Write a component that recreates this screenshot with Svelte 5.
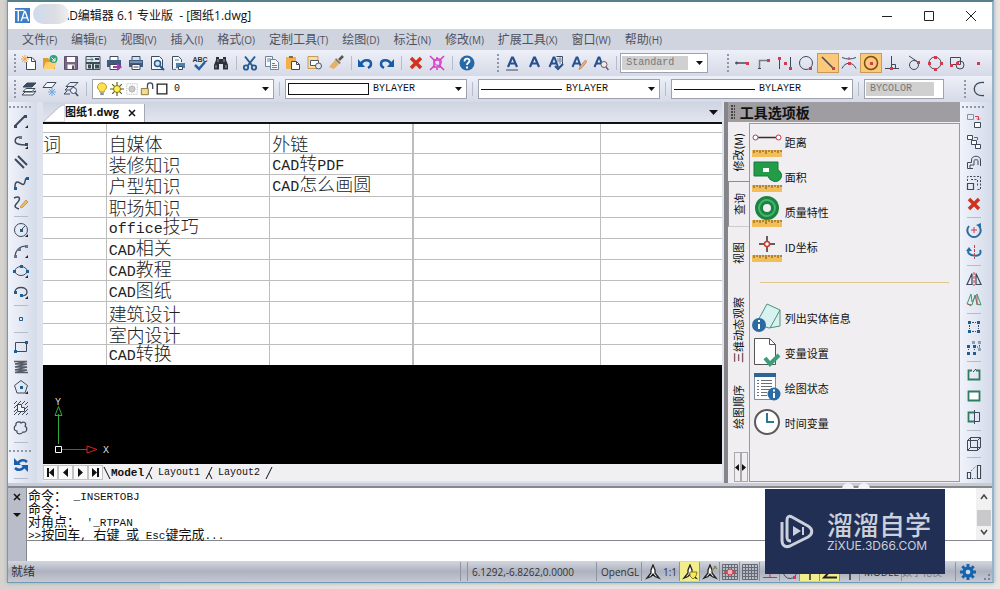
<script lang="ts">
  type Tool = { icon: string; label: string; active?: boolean };
  type Item = Tool | 'sep' | 'grip';

  const menus = [
    ['文件', 'F'], ['编辑', 'E'], ['视图', 'V'], ['插入', 'I'], ['格式', 'O'], ['定制工具', 'T'],
    ['绘图', 'D'], ['标注', 'N'], ['修改', 'M'], ['扩展工具', 'X'], ['窗口', 'W'], ['帮助', 'H'],
  ];

  const t = (icon: string, label: string, active = false): Tool => ({ icon, label, active });

  const standardBar: Item[] = [
    'grip', t('new', '新建'), t('open', '打开'), t('save', '保存'), t('export', '输出'), t('plot', '打印'),
    t('print', '快速打印'), t('preview', '打印预览'), t('publish', '发布'), t('spell', '拼写检查'), t('find', '查找'),
    'sep', t('cut', '剪切'), t('copy', '复制'), t('paste', '粘贴'), t('pasteBlock', '粘贴为块'), t('brush', '特性匹配'),
    'sep', t('undo', '放弃'), t('redo', '重做'),
    'sep', t('erase', '删除'), t('explode', '分解'),
    'sep', t('help', '帮助'),
  ];

  const textBar: Item[] = [
    'grip', t('textUnder', '多行文字'), t('text', '单行文字'), t('textFind', '文字样式'), t('textEdit', '编辑文字'),
    t('textZoom', '查找文字'), 'sep',
  ];

  const snapBar: Item[] = [
    'grip', t('track', '临时追踪点'), t('from', '捕捉自'), t('mid', '两点之间'), t('quad', '象限点'),
    t('end', '端点', true), t('inter', '交点'), t('center', '圆心', true), t('perp', '垂足'), t('tangent', '切点'),
    t('node4', '四象限'), t('insert', '插入点'), t('point', '节点'),
  ];

  const drawBar: Item[] = [
    'grip', t('line', '直线'), t('pline', '多段线'), t('mline', '多线'), t('spline', '样条曲线'), t('sketch', '徒手画'),
    'sep', t('circle', '圆'), t('arc', '圆弧'), t('ellipse', '椭圆'), t('earc', '椭圆弧'),
    'sep', t('dot', '点'),
    'sep', t('rect', '矩形'), t('helix', '螺旋'), t('polygon', '多边形'), t('hatch', '边界'), t('cloud', '云线'),
    'sep', 'grip', t('sync', '同步'), 'sep',
  ];

  const modifyBar: Item[] = [
    'grip', t('copyObj', '复制'), t('copyMany', '多重复制'), t('offset', '偏移'), t('scale', '缩放'), t('erase', '删除'),
    'sep', t('rotate', '旋转'), t('rotate3d', '三维旋转'),
    'sep', t('mirror', '镜像'), t('mirror3d', '三维镜像'),
    'sep', t('array', '阵列'), t('array3d', '三维阵列'),
    'sep', t('breakAt', '打断'), t('join', '合并'), t('trim', '修剪'),
    'sep', t('box', '长方体'),
    'sep', t('stretch', '拉伸'),
  ];

  const rows = [
    ['词', '自媒体', '外链'],
    ['', '装修知识', 'CAD转PDF'],
    ['', '户型知识', 'CAD怎么画圆'],
    ['', '职场知识', ''],
    ['', 'office技巧', ''],
    ['', 'CAD相关', ''],
    ['', 'CAD教程', ''],
    ['', 'CAD图纸', ''],
    ['', '建筑设计', ''],
    ['', '室内设计', ''],
    ['', 'CAD转换', ''],
  ];

  const sideTabs = ['修改(M)', '查询', '视图', '三维动态观察', '绘图顺序'];

  const queryTools = [
    ['distance', '距离'], ['area', '面积'], ['mass', '质量特性'], ['idpoint', 'ID坐标'],
  ];
  const infoTools = [
    ['list', '列出实体信息'], ['setvar', '变量设置'], ['status', '绘图状态'], ['time', '时间变量'],
  ];

  const log = ['命令： _INSERTOBJ', '命令：', "对角点： '_RTPAN", '>>按回车, 右键 或 Esc键完成...'];

  let sideTab = $state('查询');
  let layout = $state('Model');
  let command = $state('');

  const letterA = '<path d="M4 12 8 2.5h1L13 12M5.5 8.5h6" stroke="#27508f" stroke-width="2.2"/>';
  const smallA = '<path d="M1.500 12 5.500 2.500h1L10 12M3 8.500h6" stroke="#27508f" stroke-width="2"/>';
  const dotR = (x: number, y: number) => `<rect x="${x - 1}" y="${y - 1}" width="3" height="3" fill="#d23a4e" stroke="none"/>`;
  const sq = (x: number, y: number, c = '#1d5f93') => `<rect x="${x}" y="${y}" width="3" height="3" fill="${c}" stroke="none"/>`;
  const corner = '<path d="M15 12v3h-3z" fill="#222" stroke="none"/>';
  const ruler =
    '<path d="M0 24h30v7H0z" fill="#f3bd57" stroke="none"/><path d="M2 24v3M5 24v2M8 24v3M11 24v2M14 24v4M17 24v2M20 24v3M23 24v2M26 24v3M29 24v2" stroke="#6b5020"/>';

  const icons: Record<string, string> = {
    new: '<path d="M5 2.500h6l3.500 3.500v8.500H5.500V7" fill="#fff"/><path d="M10.500 2.500v4h4"/><path d="M4 0v8M0 4h8M1 1l6 6M7 1 1 7" stroke="#f0a34a"/>',
    open: '<path d="M1 14V3h5l1.500 2H13v9z" fill="#e39a2b" stroke="none"/><path d="M1 14 4 7h11l-3 7z" fill="#ffcf6b" stroke="none"/><circle cx="11.500" cy="4" r="4" fill="#2fa37c" stroke="none"/><path d="m9.500 2.500 3.500 3.500m0-3v3h-3" stroke="#fff"/>',
    save: '<path d="M1.500 1.500h13v13h-13z" fill="#766783" stroke="#5c4e69"/><path d="M4 2h8v5H4zM4.500 9.500h7V14h-7z" fill="#fff" stroke="none"/><path d="M9 10.500h2V14H9z" fill="#5c4e69" stroke="none"/>',
    export: '<path d="M1 1.500h14v13H1z" fill="#dfe6e4"/><path d="M1 8h14M8 8v7M3 10.500h3M3 12.500h3M10 10.500h4M10 12.500h4" stroke-width="2"/><path d="M1 4.500h7m-2-2 2 2-2 2" stroke="#2c9b76"/><path d="M10 4h4" stroke-width="2"/>',
    plot: '<path d="M4 1.500h8V6H4z" fill="#fff"/><path d="M1 5h14v7H1z" fill="#3f5b80" stroke="none"/><path d="M4 9.500h8v5H4z" fill="#fff"/><path d="M7 12h7m-3-3 3.500 3-3.500 3" stroke="#9a3fa5" stroke-width="2"/>',
    print: '<path d="M4 1.500h8V6H4z" fill="#cfe3f3"/><path d="M1 5h14v7H1z" fill="#3f5b80" stroke="none"/><path d="M2 7h12" stroke="#a8c6e2"/><path d="M4 9.500h8v5H4z" fill="#fff"/><path d="M5.500 12h5"/>',
    preview: '<path d="M2.500 1.500h8l3 3v10h-11z" fill="#f6f9fc"/><circle cx="8.500" cy="8.500" r="3" fill="#cfe4f5" stroke="#255b91" stroke-width="1.500"/><path d="m11 11 4 4" stroke="#255b91" stroke-width="2"/>',
    publish: '<path d="M2.500 14.500v-13h6l3 3V7" fill="#f6f9fc"/><path d="M5 5h4M2.500 14.500H6" stroke="#4b81ad"/><path d="M6 8h9v5H6z" fill="#4b81ad" stroke="none"/><path d="M8.500 11.500h4v3h-4z" fill="#fff"/>',
    spell: '<text x="8" y="7" font-size="7" font-weight="700" text-anchor="middle" fill="#333" stroke="none" font-family="Liberation Sans, sans-serif">ABC</text><path d="m3 10 4 4 6-7" stroke="#2462a8" stroke-width="2.500"/>',
    find: '<path d="M3 2h3v2h4V2h3v3l2 5v4.500h-5V9H6v5.500H1V10l2-5z" fill="#2d3138" stroke="none"/><path d="M3 10v3M13 10v3M5 4v3M11 4v3" stroke="#9aa4b4"/>',
    cut: '<path d="M3 1.500 10.500 11M13 1.500 5.500 11" stroke="#255b91" stroke-width="2"/><circle cx="4" cy="12.500" r="2.200" stroke="#255b91" stroke-width="1.800"/><circle cx="12" cy="12.500" r="2.200" stroke="#255b91" stroke-width="1.800"/>',
    copy: '<path d="M1.500 1.500h7v10h-7z" fill="#f7fafc" stroke="#6d8398"/><path d="M6.500 4.500h5l3 3v7h-8z" fill="#f7fafc" stroke="#6d8398"/><path d="M3 4h4M3 6h3M8 8.500h3M8 10.500h5M8 12.500h5" stroke="#6d8398"/>',
    paste: '<path d="M1 2h10v12H1z" fill="#f1b04a" stroke="none"/><path d="M4 1h4v2H4z" fill="#8b6a38" stroke="none"/><path d="M6.500 6.500h5l3 3v5h-8z" fill="#fff"/><path d="M11.500 6.500v3h3"/>',
    pasteBlock: '<path d="M1 1.500h10v12H1z" fill="#f6ddb0" stroke="#c79a55"/><path d="M3.500 5.500h8v5h-8z" fill="#fff" stroke="#4d5668"/><circle cx="11.500" cy="11" r="3" fill="#e4eaf0" stroke="#4d5668"/>',
    brush: '<path d="m15 1-4 4" stroke="#555" stroke-width="2.500"/><path d="m8 3 5 5-2 1-4-4z" fill="#8d7864" stroke="none"/><path d="m7 5 4 4-5 5-5-2z" fill="#e7b066" stroke="none"/>',
    undo: '<path d="M4 9c2-5 10-5 10 0 0 2-1 3-3 4" stroke="#165ba5" stroke-width="2.500"/><path d="M1 4v8h7z" fill="#165ba5" stroke="none"/>',
    redo: '<path d="M12 9C10 4 2 4 2 9c0 2 1 3 3 4" stroke="#165ba5" stroke-width="2.500"/><path d="M15 4v8H8z" fill="#165ba5" stroke="none"/>',
    erase: '<path d="m3 3 10 10M13 3 3 13" stroke="#d2311c" stroke-width="3.500"/>',
    explode: '<path d="M5 5h6v7H5zM1 1l4 4M15 1l-4 4M1 15l4-4M15 15l-4-4M8 2v2M8 13v2" stroke="#dc35c4" stroke-width="1.500"/><circle cx="9" cy="7" r="3.500" stroke="#dc35c4"/>',
    help: '<circle cx="8" cy="8" r="7.500" fill="#2669a4" stroke="none"/><path d="M5.500 6.500c0-4 5-3.500 5-.700C10.500 8 8 7.500 8 10" stroke="#fff" stroke-width="1.800"/><path d="M7 11.500h2v2H7z" fill="#fff" stroke="none"/>',
    textUnder: letterA + '<path d="M2 15h12"/>',
    text: letterA,
    textFind: smallA + '<path d="M8.500 1.500h6v8" fill="#eef" /><path d="M9 4h6M9 6h6M12 2v7" stroke="#7a8aa3"/><path d="m7 11 3 3 5-5" stroke="#27508f" stroke-width="2"/>',
    textEdit: smallA + '<path d="m14.500 5-5 6-1.500 3.500 3-2 5-6z" fill="#e9b38a" stroke="#c58b62"/>',
    textZoom: smallA + '<circle cx="11" cy="9.500" r="3" fill="#f6e9e4" stroke="#6a5a70"/><path d="m13 12 2.500 3" stroke="#6a5a70" stroke-width="1.500"/>',
    track: '<path d="M2 8h12" stroke="#4b4a58" stroke-width="1.500"/><circle cx="2.500" cy="8" r="1" />' + dotR(13, 8),
    from: '<path d="M4.500 14V5.500H13" stroke="#777c88" stroke-width="1.500"/>' + dotR(13, 5) + '<path d="M3 13.500h3"/>',
    mid: '<path d="M2.500 2v12M13.500 2v12"/>' + dotR(2, 3) + dotR(8, 8) + dotR(13, 13),
    quad: '<circle cx="8" cy="8" r="6.500"/>' + dotR(12, 13),
    end: '<path d="m2 2 11 11" stroke-width="1.500"/>' + dotR(13, 13),
    inter: '<path d="M1 2.500c5 2 9 2 14 0M1 13.500c3-7 11-7 14 0"/><path d="M8 2v3" stroke="#d23a4e"/>' + dotR(8, 8),
    center: '<circle cx="8" cy="8" r="6.500" stroke-width="1.500" stroke="#7a4c17"/>' + dotR(8, 8),
    perp: '<path d="M7.500 1v12M1 13.500h14M7.500 9.500h4v4"/>' + dotR(7, 13),
    tangent: '<circle cx="8" cy="10" r="4.500"/><path d="m3 1 9 6"/>' + dotR(12, 7),
    node4: '<circle cx="8" cy="8" r="6"/>' + dotR(8, 2) + dotR(8, 14) + dotR(2, 8) + dotR(14, 8),
    insert: '<path d="M1.500 2.500h10v7h-10z"/><circle cx="11" cy="10" r="4"/>' + dotR(2, 10) + dotR(8, 8),
    point: dotR(8, 8),
    halfCircle: '<path d="M13 1.500c-13-2-13 15 0 13" stroke-width="1.300"/>',
    line: '<path d="m2 13 10-10" stroke-width="2"/>' + sq(1, 12, '#3d4a5c') + sq(11, 2, '#3d4a5c') + corner,
    pline: '<path d="M7 3C1 3 1 9 5 10c3 1 5 1 8 1" stroke-width="1.500"/>' + sq(6, 2, '#66768b') + sq(12, 9, '#3d4a5c') + corner,
    mline: '<path d="m2 5 9 9M5 2l9 9" stroke-width="2"/>',
    spline: '<path d="M2 13c0-4 0-5 2-6s5 4 7 2 0-5 3-6" stroke-width="1.500"/>' + sq(1, 12) + sq(13, 2),
    sketch: '<path d="M1 3c6-3 7 1 3 5s-1 5 2 6" stroke-width="1.500"/><path d="m7 12 6-7 2 2-6 6z" fill="#edbc5f" stroke="#c89b50"/>',
    circle: '<circle cx="8" cy="8" r="6.500"/><path d="m8 8 4-4"/>' + sq(7, 7) + corner,
    arc: '<path d="M2 14C2 7 7 3 13 3" stroke-width="1.200"/>' + sq(1, 12, '#66768b') + sq(12, 2, '#66768b') + sq(5, 5, '#66768b') + corner,
    ellipse: '<ellipse cx="8" cy="8" rx="6" ry="4.500"/>' + sq(0, 7) + sq(13, 7) + sq(7, 2) + corner,
    earc: '<path d="M2 8c0-6 12-6 12 0 0 3-3 4-6 4" stroke-width="1.300"/>' + sq(1, 7) + sq(7, 10) + corner,
    dot: '<path d="M6.500 6.500h3v3h-3z" stroke="#1d5f93"/>',
    rect: '<path d="M2.500 3.500h11v9h-11z"/>' + sq(1, 11) + sq(12, 2),
    helix: '<path d="M1 2.500h13L2 5h12L2 8h12L2 11h12L2 13.500h13" stroke="#565d68" stroke-width="1.300"/>',
    polygon: '<path d="m8 1.500 6.500 5L12 14H4L1.500 6.500z"/>' + sq(7, 7) + corner,
    hatch: '<path d="M1 4l3-3M1 8l7-7M1 12l4-4M9 4l3-3M12 5l3-3M12 9l3-3M1 15l3-3M5 15l3-3M9 15l6-6M13 15l2-2"/><path d="M4.500 4.500h4v3h3v4h-7z" fill="#f4f7fc"/>',
    cloud: '<path d="M3 5c-1-3 4-4 5-2 3-2 6 0 4 3 3 2 2 7-2 6-2 3-7 2-6-1-3 0-4-4-1-6z" stroke-width="1.200"/>',
    sync: '<path d="M14 5c-3-3-7-2-9 1M2 11c3 3 7 2 9-1" stroke="#1a5fae" stroke-width="2.500"/><path d="M1 1v7h7zM15 15V8H8z" fill="#1a5fae" stroke="none"/>',
    copyObj: '<path d="M1.500 1.500h6v5h-6z" stroke="#8a909a"/><path d="M8.500 9.500h6v5h-6z" fill="#fff"/><path d="M9 3.500h3.500V7m-1.500-1.500L12.500 7 14 5.500" stroke="#d23a4e"/>',
    copyMany: '<path d="M1.500 1.500h5v4h-5zM5.500 6.500h5v4h-5zM9.500 10.500h5v4h-5z" fill="#fff"/><path d="M8 3.500h3.500V6" stroke="#d23a4e"/>',
    offset: '<path d="M1.500 14.500v-6h4V6c0-5 9-5 9 0v6M4 14v-3h4V6.500c0-1 4-1 4 0V11M1.500 14.500H7"/>',
    scale: '<path d="M1.500 8.500h6v6h-6z" stroke-width="1.200"/><path d="M1.500 6V1.500h13v13H10M5 4.500h6.500V12" stroke-dasharray="2 1.500"/>',
    rotate: '<path d="M3 3c-4 5 0 11 5 11s9-6 5-11" stroke="#2a6f9f" stroke-width="2"/><path d="M8 4v6M5 7h6" stroke="#d23a4e"/><path d="M15 5V0L10 2z" fill="#2a6f9f" stroke="none"/>',
    rotate3d: '<path d="M3 6c-5 6 15 9 11 0" stroke="#2a6f9f" stroke-width="2"/><path d="M8.500 1v14" stroke="#d23a4e" stroke-dasharray="3 1"/><path d="M0 7h6L3 3z" fill="#2a6f9f" stroke="none"/>',
    mirror: '<path d="M6 2.500v11H1zM10 2.500v11h5z" stroke-width="1.200"/><path d="M8 1v14" stroke="#d23a4e" stroke-dasharray="3 1"/>',
    mirror3d: '<path d="M5 2 1 12l5 1 3-10 2 9 4 1-4-11-5 8z" stroke="#3c9768"/><path d="m2 12 3 2M11 4v9" stroke="#d23a4e"/>',
    array: sq(2, 2) + sq(11, 2) + sq(2, 11) + sq(11, 11) + '<path d="M6 3.500h4M6 12.500h4M3.500 6v4M12.500 6v4" stroke-dasharray="2 1"/>',
    array3d: sq(1, 5) + sq(7, 5) + sq(1, 12) + sq(7, 12) + sq(12, 1, '#8aa0b5') + sq(12, 8, '#8aa0b5') + sq(6, 1, '#8aa0b5') + '<path d="M2.500 9v2M8.500 9v2M13.500 5v2M11 7h4" stroke-dasharray="1 1"/>',
    breakAt: '<path d="M6 3.500H2.500v9h11v-9H10" stroke="#2e7d63" stroke-width="1.800"/><path d="m7 5 3-3"/>',
    join: '<path d="M2.500 3.500h11v9h-11z" fill="#fff" stroke="#2e7d63" stroke-width="1.800"/>',
    trim: '<path d="M8 3.500H2.500v9H8" stroke="#2e7d63" stroke-width="1.800"/><path d="M8.500 1v14M9 3.500h4.500v9H9"/>',
    box: '<path d="M1.500 4.500h10v10h-10zM4.500 1.500h10v10M1.500 4.500l3-3M11.500 4.500l3-3M11.500 14.500l3-3M4.500 1.500v10h10M4.500 11.500l-3 3"/>',
    stretch: '<path d="M1.500 8.500h3v6h-3zM11.500 1.500h3v13h-3z" fill="#fff" stroke-width="1.200"/><path d="m5 7 5-5M6 14.500h4" stroke-dasharray="1 1.500"/>',
    layers: '<path d="m1 14 3-3h8l3-1-3 4zM2 10.500l3-3h9l-3 3z" fill="#f5f8fc"/><path d="m2 6 4-4h9l-4 4z" fill="#3a4a60"/>',
    layerStar: '<path d="m1 6.500 4-5h9l-4 5z" fill="#f5f8fc"/><path d="M10 7v8M6 11h8M7 8l6 6M13 8l-6 6" stroke="#6aa9dd"/>',
    layerFind: '<path d="m1 13 3-3M2 9l3-3M3 5.500l4-4h8l-4 4zM1 13h6M2 9h6"/><circle cx="10.500" cy="9.500" r="3" fill="#eef"/><path d="m12.500 12 2.500 3" stroke-width="1.500"/>',
    bulb: '<path d="M5.500 10C0 6 4 1 8 1s8 5 2.500 9v1.500h-5z" fill="#ffe34d" stroke="#a8871c"/><path d="M6 12h4v3H6z" fill="#8b8f94" stroke="none"/>',
    sun: '<path d="M8 0v16M0 8h16M2.500 2.500l11 11M13.500 2.500l-11 11" stroke="#5d5613" stroke-width="1.300"/><circle cx="8" cy="8" r="4" fill="#fff04a" stroke="#6f6618"/>',
    freeze: '<path d="M2 2h12v12H2z" stroke="#aaa" stroke-dasharray="1 1"/><circle cx="8" cy="8" r="3.500" fill="#ccc" stroke="#aaa"/>',
    lock: '<path d="M1.500 7.500h8v7h-8z" fill="#f2dc92" stroke="#7f6a2c"/><path d="M8.500 7V4c0-4 6-4 6 0v4" stroke-width="1.500"/>',
    swatch: '<path d="M2.500 2.500h11v11h-11z" fill="#fff" stroke="#222" stroke-width="1.500"/>',
    compass: '<path d="m8 1 2 5v3l4 5-4-1.500L8 10l-2 2.500L2 14l4-5V6z" fill="#fff" stroke="#222" stroke-width="1.300"/>',
    gear: '<path d="M8 0v16M0 8h16M2.300 2.300l11.400 11.400M13.700 2.300 2.300 13.700" stroke="#1764ad" stroke-width="3"/><circle cx="8" cy="8" r="5.500" fill="#1764ad" stroke="none"/><circle cx="8" cy="8" r="2.300" fill="#c5dcf0" stroke="none"/>',
    grid: '<path d="M.5.5h15v15H.5zM3.500 1v14M6.500 1v14M9.500 1v14M12.500 1v14M1 3.500h14M1 6.500h14M1 9.500h14M1 12.500h14" stroke="#666a72"/>',
    ortho: '<path d="M8 1v13M1 13.500h14" stroke="#c33a3a"/>',
    angle: '<path d="M13 2 2 13.500h13" stroke="#222" stroke-width="2"/>',
    plus: '<path d="M8 1v15M2 8h12" stroke="#333" stroke-width="1.500"/>',
  };
  icons.compassOn = icons.compass + '<path d="M8 8h7l-1 4-3 3-3-3z" fill="#f5e95c" stroke="#8a7d22"/>';
  icons.compassAuto = icons.compass + '<path d="m9 8 5-6M12 2l3 3" stroke="#885" stroke-width="1.500"/>';
  icons.snap = icons.grid + '<path d="M2 8h12" stroke="#d23a4e" stroke-width="1.500"/><circle cx="8" cy="8" r="3" fill="#e9b5b5" stroke="#d23a4e"/>';

  const bigIcons: Record<string, string> = {
    distance: '<path d="M3 11.500h24" stroke="#3b2a2e" stroke-width="1.500"/><circle cx="3.500" cy="11.500" r="2.500" fill="#fff" stroke="#b23a4a"/><circle cx="26.500" cy="11.500" r="2.500" fill="#fff" stroke="#b23a4a"/>' + ruler,
    area: '<path d="M2 1h24v8a6 6 0 1 1-5 11q-4-1-5-5H2z" fill="#229c46" stroke="#17793a"/><path d="M11 7h6v4h-6z" fill="#fff" stroke="none"/>' + ruler,
    mass: '<circle cx="15" cy="12" r="8" stroke="#1c8442" stroke-width="8"/><circle cx="15" cy="12" r="8" stroke="#45b56b" stroke-width="2"/>' + ruler,
    idpoint: '<path d="M15 5v6M15 15v6M7 13h5M18 13h5" stroke="#3b2a2e" stroke-width="1.500"/><circle cx="15" cy="13" r="2.500" fill="#fff" stroke="#d23a2a" stroke-width="1.500"/>' + ruler,
    list: '<path d="m15 2 13 6v16l-11 2-13-4z" fill="#d8f2f2" stroke="#4c9078"/><path d="M28 8 18 26" stroke="#4c9078"/><circle cx="7" cy="23" r="7" fill="#2a6ba3" stroke="none"/><path d="M7 22v5M7 18v2" stroke="#fff" stroke-width="2"/>',
    setvar: '<path d="M2.500 1.500h15l6 6v20h-21z" fill="#fff" stroke="#555"/><path d="M17.500 1.500v6h6" stroke="#555"/><path d="m13 21 5 6 9-9" stroke="#3d9d78" stroke-width="4"/>',
    status: '<path d="M2.500 1.500h21v26h-21z" fill="#fff" stroke="#7b8da1"/><path d="M2 1h22v4H2z" fill="#2c6497" stroke="none"/><path d="M5 8.500h2M5 11.500h2M5 14.500h2M5 17.500h2M5 20.500h2M5 23.500h2M9 8.500h11M9 11.500h11M9 14.500h11M9 17.500h9M9 20.500h6M9 23.500h6" stroke="#6c6f75"/><circle cx="22" cy="22" r="6.500" fill="#2a6ba3" stroke="none"/><path d="M22 21v5M22 17.500v2" stroke="#fff" stroke-width="2"/>',
    time: '<circle cx="15" cy="15" r="12" fill="#fff" stroke="#5d5a5c" stroke-width="2"/><path d="M15 6v9h7" stroke="#2a7796" stroke-width="2"/>',
  };

  const logo =
    '<rect x="0" y="0" width="16" height="16" fill="#3a7fc8" stroke="none"/><path d="M3.500 14V2M0 2.500h10M6.500 14 10 4h1l3.500 10M8 10.500h5" stroke="#fff" stroke-width="1.500"/>';

  // runs of half-width characters are set in the mono face
  function runs(s: string) {
    return s.split(/([\x20-\x7e]+)/).filter(Boolean).map((text) => ({ text, latin: /^[\x20-\x7e]/.test(text) }));
  }
</script>

{#snippet glyph(body: string)}
  <svg class="icon" viewBox="0 0 16 16" aria-hidden="true">{@html body}</svg>
{/snippet}

{#snippet tools(items: Item[])}
  {#each items as item}
    {#if item === 'sep'}
      <i class="sep"></i>
    {:else if item === 'grip'}
      <i class="grip"></i>
    {:else}
      <button class="tool" class:active={item.active} aria-label={item.label}>{@render glyph(icons[item.icon])}</button>
    {/if}
  {/each}
{/snippet}

{#snippet mixed(s: string)}
  {#each runs(s) as run}<span class:latin={run.latin}>{run.text}</span>{/each}
{/snippet}

{#snippet arrow()}
  <svg class="arrow" viewBox="0 0 7 4" aria-hidden="true"><path d="M0 0h7L3.500 4z" /></svg>
{/snippet}

<div class="window">
  <header class="titlebar">
    <svg class="logo" viewBox="0 0 16 16" aria-hidden="true">{@html logo}</svg>
    <h1>CAD编辑器 6.1 专业版&nbsp; - [图纸1.dwg]</h1>
    <i class="smudge"></i>
    <button class="caption" aria-label="最小化"><svg viewBox="0 0 12 12"><path d="M1 6.500h10" /></svg></button>
    <button class="caption" aria-label="最大化"><svg viewBox="0 0 12 12"><path d="M1.500 1.500h9v9h-9z" /></svg></button>
    <button class="caption" aria-label="关闭"><svg viewBox="0 0 12 12"><path d="m1 1 10 10M11 1 1 11" /></svg></button>
  </header>

  <nav class="menubar">
    {#each menus as [name, key]}
      <button>{name}<small>({key})</small></button>
    {/each}
  </nav>

  <div class="toolbar standard">
    <div class="pane">{@render tools(standardBar)}</div>
    <div class="pane">
      {@render tools(textBar)}
      <label class="combo disabled style">
        <select aria-label="文字样式" disabled><option>Standard</option></select>{@render arrow()}
      </label>
    </div>
    <div class="pane">{@render tools(snapBar)}</div>
  </div>

  <div class="toolbar props">
    <i class="grip"></i>
    <button class="tool" aria-label="图层">{@render glyph(icons.layers)}</button>
    <button class="tool" aria-label="冻结图层">{@render glyph(icons.layerStar)}</button>
    <button class="tool" aria-label="查找图层">{@render glyph(icons.layerFind)}</button>
    <i class="sep"></i>
    <label class="combo">
      {#each ['bulb', 'sun', 'freeze', 'lock', 'swatch'] as name}{@render glyph(icons[name])}{/each}
      <select aria-label="当前图层"><option>0</option></select>{@render arrow()}
    </label>
    <i class="sep"></i>
    <label class="combo">
      <span class="swatch"></span>
      <select aria-label="颜色"><option>BYLAYER</option></select>{@render arrow()}
    </label>
    <i class="sep"></i>
    <label class="combo">
      <span class="stroke"></span>
      <select aria-label="线型"><option>BYLAYER</option></select>{@render arrow()}
    </label>
    <i class="sep"></i>
    <label class="combo">
      <span class="stroke"></span>
      <select aria-label="线宽"><option>BYLAYER</option></select>{@render arrow()}
    </label>
    <i class="sep"></i>
    <label class="combo disabled print">
      <select aria-label="打印样式" disabled><option>BYCOLOR</option></select>
    </label>
    <i class="grip"></i>
    <button class="tool" aria-label="圆弧">{@render glyph(icons.halfCircle)}</button>
  </div>

  <main class="workspace">
    <div class="rail left">{@render tools(drawBar)}</div>

    <section class="document">
      <div class="tabstrip">
        <div class="filetab">
          <svg class="slope" viewBox="0 0 20 20" preserveAspectRatio="none" aria-hidden="true"><path d="M0 20 14 4q3-3 6-3v19z" /></svg>
          <span>图纸1.dwg</span>
          <button aria-label="关闭图纸"><svg viewBox="0 0 8 8"><path d="m1 1 6 6M7 1 1 7" /></svg></button>
        </div>
        <button class="more" aria-label="图纸列表"><svg viewBox="0 0 9 5"><path d="M0 0h9L4.500 5z" /></svg></button>
      </div>
      <div class="sheet">
        <table>
          <colgroup><col class="c1" /><col class="c2" /><col class="c3" /><col class="c4" /><col /></colgroup>
          <tbody>
            <tr class="head"><td></td><td></td><td></td><td></td><td></td></tr>
            {#each rows as row}
              <tr>
                {#each row as cell}<td>{@render mixed(cell)}</td>{/each}
                <td></td><td></td>
              </tr>
            {/each}
          </tbody>
        </table>
      </div>
      <div class="canvas">
        <svg class="ucs" viewBox="0 0 80 70" aria-hidden="true">
          <path class="axis-y" d="M15.500 50V20M12 21.500h7l-3.500-9z" />
          <path class="axis-x" d="M19 55.500h25M44 52v7l10-3.500z" />
          <path class="origin" d="M12.500 52.500h6v6h-6z" />
          <text x="12" y="11">Y</text>
          <text x="60" y="59">X</text>
        </svg>
      </div>
      <div class="layouts">
        <button class="nav" aria-label="第一个"><svg viewBox="0 0 9 9"><path d="M1 0h2v9H1zM8 0v9L3 4.500z" /></svg></button>
        <button class="nav" aria-label="上一个"><svg viewBox="0 0 9 9"><path d="M7 0v9L2 4.500z" /></svg></button>
        <button class="nav" aria-label="下一个"><svg viewBox="0 0 9 9"><path d="M2 0v9l5-4.500z" /></svg></button>
        <button class="nav" aria-label="最后一个"><svg viewBox="0 0 9 9"><path d="M1 0v9l5-4.500zM6 0h2v9H6z" /></svg></button>
        <svg class="edge" viewBox="0 0 8 14"><path d="m1 1 6 12" /></svg>
        {#each ['Model', 'Layout1', 'Layout2'] as name, i}
          <button class="layout" class:current={layout === name} onclick={() => (layout = name)}>{name}</button>
          <svg class="edge" viewBox="0 0 8 14"><path d={i < 2 ? 'M7 1 1 13M4 7l3 6' : 'M7 1 1 13'} /></svg>
        {/each}
      </div>
    </section>

    <aside class="palette">
      <h2><i></i>工具选项板</h2>
      <div class="side">
        {#each sideTabs as name}
          <button class:current={sideTab === name} onclick={() => (sideTab = name)}><span>{name}</span></button>
        {/each}
        <div class="scroller">
          <button aria-label="向上滚动"><svg viewBox="0 0 4 7"><path d="M4 0v7L0 3.500z" /></svg></button>
          <button aria-label="向下滚动"><svg viewBox="0 0 4 7"><path d="M0 0v7l4-3.500z" /></svg></button>
        </div>
      </div>
      <div class="panel">
        {#each queryTools as [icon, name]}
          <button><svg viewBox="0 0 30 31" aria-hidden="true">{@html bigIcons[icon]}</svg>{name}</button>
        {/each}
        <hr />
        {#each infoTools as [icon, name]}
          <button><svg viewBox="0 0 30 31" aria-hidden="true">{@html bigIcons[icon]}</svg>{name}</button>
        {/each}
      </div>
    </aside>

    <div class="rail right">{@render tools(modifyBar)}</div>
  </main>

  <section class="console">
    <div class="handle">
      <button aria-label="关闭命令行"><svg viewBox="0 0 8 8"><path d="m1 1 6 6M7 1 1 7" /></svg></button>
      <button aria-label="命令行选项"><svg viewBox="0 0 8 8"><path class="solid" d="M0 2h8L4 6z" /></svg></button>
    </div>
    <div class="lines">
      <div class="log">
        {#each log as line}<p>{@render mixed(line)}</p>{/each}
      </div>
      <input aria-label="命令" bind:value={command} />
    </div>
    <div class="scrollbar">
      <svg viewBox="0 0 8 6"><path d="m1 5 3-4 3 4" /></svg>
      <i></i>
      <svg viewBox="0 0 8 6"><path d="m1 1 3 4 3-4" /></svg>
    </div>
  </section>

  <footer class="statusbar">
    <span class="ready">就绪</span>
    <span class="blank"></span>
    <span class="coords">6.1292,-6.8262,0.0000</span>
    <span class="gl">OpenGL</span>
    <span class="scale">{@render glyph(icons.compass)}1:1</span>
    <button class="on" aria-label="注释可见性">{@render glyph(icons.compassOn)}</button>
    <button aria-label="自动缩放">{@render glyph(icons.compassAuto)}</button>
    <button aria-label="捕捉">{@render glyph(icons.snap)}</button>
    <button aria-label="栅格">{@render glyph(icons.grid)}</button>
    <button aria-label="正交">{@render glyph(icons.ortho)}</button>
    <button aria-label="极轴">{@render glyph(icons.quad)}</button>
    <button class="on" aria-label="对象捕捉">{@render glyph(icons.plus)}</button>
    <button class="on" aria-label="追踪">{@render glyph(icons.angle)}</button>
    <button aria-label="线宽显示">{@render glyph(icons.plus)}</button>
    <span class="model">MODEL</span>
    <span class="tablet">数字化仪</span>
    <button class="settings" aria-label="设置">{@render glyph(icons.gear)}</button>
    <i class="resize"></i>
  </footer>

  <div class="brand">
    <i class="knob"></i><i class="knob"></i>
    <svg viewBox="0 0 36 36" aria-hidden="true">
      <path d="M3 9v18c0 7 5 8 10 5l16-8c5-3 5-8 0-11L13 4C10 2 8 4 8 7v17c0 3 1 4 4 4" />
      <path class="solid" d="m14 13 8 5-8 5zM23 14h2v8h-2z" />
    </svg>
    <div>
      <strong>溜溜自学</strong>
      <span>ZiXUE.3D66.COM</span>
    </div>
  </div>
</div>

<style>
  :global(body) {
    margin: 0;
    background: linear-gradient(90deg, #d6d3cf 0, #d6d3cf 16%, #e6e0dc 16%, #e9e5e2 100%);
  }

  .window {
    --ink: #3d4a5c;
    --cjk: 'Noto Sans CJK SC';
    position: relative;
    display: flex;
    flex-direction: column;
    box-sizing: border-box;
    min-height: calc(100vh - 6px);
    margin: 0 6px 6px 7px;
    border: 1px solid #6f9cb5;
    border-top: 2px solid #55808a;
    border-right: 2px solid #8fb4d0;
    background: #dfe3ee;
    box-shadow: 0 0 4px #9aa6ae;
    font: 11px/14px 'Open Sans', var(--cjk), sans-serif;
    color: #222;
  }

  button {
    display: flex;
    align-items: center;
    justify-content: center;
    padding: 0;
    border: 0;
    background: none;
    font: inherit;
    color: inherit;
  }

  svg {
    display: block;
    flex: none;
    fill: none;
  }

  .icon {
    width: 16px;
    height: 16px;
    stroke: var(--ink);
  }

  .titlebar {
    position: relative;
    display: flex;
    align-items: center;
    height: 27px;
    padding-left: 7px;
    background: #fff;
  }

  .logo {
    width: 15px;
    height: 15px;
  }

  h1 {
    flex: 1;
    margin: 0 0 0 24px;
    font: 12px/16px 'Open Sans', var(--cjk), sans-serif;
    color: #111;
  }

  .smudge {
    position: absolute;
    left: 25px;
    top: 2px;
    width: 36px;
    height: 20px;
    border-radius: 10px;
    background: linear-gradient(90deg, #cddbee, #dcdde2 60%, #eeeeef);
  }

  .caption {
    width: 42px;
    height: 27px;
  }

  .caption svg {
    width: 12px;
    height: 12px;
    stroke: #222;
  }

  .menubar {
    display: flex;
    gap: 14px;
    height: 21px;
    padding-left: 14px;
    background: #d0d4df;
    font-size: 12px;
    color: #4d5260;
  }

  .menubar small {
    font-size: 10px;
  }

  .toolbar {
    height: 26px;
    padding: 0 3px 0 6px;
    background: linear-gradient(#edf0f8, #d6dae7);
  }

  .standard {
    display: grid;
    grid-template-columns: 464fr 212fr 262fr;
    gap: 19px;
  }

  .pane,
  .props {
    display: flex;
    align-items: center;
  }

  .tool {
    flex: 1;
    min-width: 0;
    min-height: 0;
    height: 20px;
  }

  .tool.active {
    background: #fcc879;
    box-shadow: inset 0 0 0 1px #c79a55;
  }

  .sep {
    flex: none;
    width: 1px;
    height: 14px;
    margin: 0 3px 0 4px;
    background: #b6bccb;
  }

  .grip {
    flex: none;
    width: 4px;
    height: 18px;
    background: radial-gradient(circle at 1px 1px, #9097a8 1px, transparent 1px) 0 0 / 4px 4px repeat-y;
  }

  .combo {
    display: flex;
    align-items: center;
    flex: 1;
    box-sizing: border-box;
    min-width: 0;
    height: 20px;
    padding: 0 4px 0 2px;
    border: 1px solid #9da2ae;
    background: #fff;
  }

  .combo select {
    flex: 1;
    min-width: 0;
    height: 14px;
    padding: 0 0 0 4px;
    border: 0;
    appearance: none;
    background: none;
    font: 10px/14px 'Liberation Mono', monospace;
    color: #111;
    opacity: 1;
  }

  .arrow {
    width: 7px;
    height: 4px;
    fill: #111;
  }

  .combo.disabled {
    padding: 1px;
  }

  .combo.disabled select {
    margin-right: 8px;
    background: #d0d0d0;
    color: #777;
  }

  .combo.style {
    flex: 0 0 88px;
    padding-right: 4px;
  }

  .props .tool {
    flex: 0 0 21px;
  }

  .props .sep {
    margin: 0 5px;
  }

  .props .combo.print {
    flex: 0 0 80px;
    margin-right: 20px;
  }

  .combo .icon {
    width: 14px;
    height: 14px;
    margin-right: 1px;
  }

  .swatch {
    box-sizing: border-box;
    width: 81px;
    height: 12px;
    border: 1px solid #111;
  }

  .stroke {
    width: 81px;
    height: 1px;
    background: #111;
  }

  .workspace {
    display: flex;
    flex: 1;
    min-height: 382px;
  }

  .rail {
    display: flex;
    flex-direction: column;
    align-items: center;
    box-sizing: border-box;
    background: linear-gradient(90deg, #f0f3fb, #d5dbea);
  }

  .rail.left {
    width: 29px;
    margin-right: 6px;
    padding-bottom: 4px;
    padding-right: 3px;
  }

  .rail.right {
    width: 32px;
    padding-bottom: 4px;
    padding-right: 4px;
  }

  .rail .tool {
    width: 22px;
    height: auto;
  }

  .rail .sep {
    width: 14px;
    height: 1px;
    margin: 3px 0;
  }

  .rail .grip {
    width: 24px;
    height: 4px;
    margin: 4px 0 1px;
    background: radial-gradient(circle at 1px 1px, #9097a8 1px, transparent 1px) 0 0 / 4px 4px repeat-x;
  }

  .document {
    display: flex;
    flex: 1;
    flex-direction: column;
    min-width: 0;
    padding-bottom: 5px;
  }

  .tabstrip {
    display: flex;
    align-items: flex-end;
    justify-content: space-between;
    height: 20px;
    border-bottom: 2px solid #111;
    background: linear-gradient(#cfd4e2, #e2e6f0);
  }

  .filetab {
    display: flex;
    align-items: center;
    height: 18px;
    color: #111;
    font-weight: 700;
  }

  .filetab > span,
  .filetab > button {
    height: 18px;
    background: #fff;
    line-height: 15px;
  }

  .filetab > button {
    width: 26px;
    border-right: 1px solid #a3a8b4;
  }

  .filetab button svg {
    width: 8px;
    height: 8px;
    stroke: #111;
    stroke-width: 1.5;
  }

  .slope {
    width: 22px;
    height: 18px;
    fill: #fff;
    stroke: #c4c8d2;
  }

  .more {
    width: 17px;
    height: 20px;
  }

  .more svg {
    width: 9px;
    height: 5px;
    fill: #111;
  }

  .sheet {
    height: 241px;
    overflow: hidden;
    background: #fff;
  }

  table {
    width: 100%;
    height: 242px;
    table-layout: fixed;
    border-collapse: collapse;
  }

  .c1 { width: 9.3%; }
  .c2 { width: 24.1%; }
  .c3 { width: 21.1%; }
  .c4 { width: 27.7%; }

  td {
    height: 20px;
    padding: 0 0 0 2px;
    border-right: 1px solid #bdbdbd;
    border-bottom: 1px solid #bdbdbd;
    font-family: var(--cjk), sans-serif;
    font-size: 18px;
    font-weight: 300;
    line-height: 14px;
    white-space: nowrap;
    color: #222;
  }

  td:first-child {
    padding: 0;
  }

  td:nth-child(3) {
    border-right-width: 2px;
  }

  td:last-child {
    border-right: 0;
  }

  .head td {
    height: 8px;
    line-height: 8px;
  }

  td .latin {
    font-family: 'Liberation Mono', monospace;
    font-size: 15px;
  }

  .canvas {
    display: flex;
    flex: 1;
    align-items: flex-end;
    min-height: 99px;
    background: #000;
  }

  .ucs {
    width: 80px;
    height: 70px;
  }

  .ucs text {
    fill: #ddd;
    font: 10px 'Liberation Mono', monospace;
  }

  .axis-y { stroke: #2fae3d; }
  .axis-x { stroke: #d02a22; }
  .origin { stroke: #fff; }

  .layouts {
    display: flex;
    align-items: center;
    height: 17px;
    background: #f0eff1;
    font: 10px/14px 'Liberation Mono', monospace;
    color: #111;
  }

  .nav {
    box-sizing: border-box;
    width: 15px;
    height: 15px;
    border: 1px solid #c3c3c7;
    background: #fafafa;
  }

  .nav svg {
    width: 9px;
    height: 9px;
    fill: #111;
  }

  .edge {
    width: 8px;
    height: 14px;
    stroke: #111;
  }

  .layout {
    padding: 0 5px;
  }

  .layout.current {
    padding: 0 1px 0 0;
    font-size: 11px;
    font-weight: 700;
  }

  .palette {
    display: grid;
    grid-template: 20px 1fr / 21px 1fr;
    flex: 0 0 24%;
    box-sizing: border-box;
    margin-left: 2px;
    padding-bottom: 4px;
    border-left: 4px solid #858488;
    background: #f0eef0;
  }

  .palette h2 {
    display: flex;
    grid-column: 1 / -1;
    align-items: center;
    gap: 5px;
    margin: 0;
    padding-left: 3px;
    background: #9f9da1;
    font: 700 14px/20px var(--cjk), sans-serif;
    color: #111;
  }

  .palette h2 i {
    width: 4px;
    height: 14px;
    background: radial-gradient(circle at 1px 1px, #444 1px, transparent 1px) 0 0 / 3px 3px;
  }

  .side {
    display: grid;
    grid-template-rows: 58fr 46fr 52fr 100fr 54fr 18fr 30px;
    padding-top: 1px;
    font: 11px/14px var(--cjk), sans-serif;
    color: #111;
  }

  .side > button span {
    writing-mode: vertical-rl;
    text-orientation: sideways;
    transform: rotate(180deg);
  }

  .side > button.current {
    border: 1px solid #8d8c90;
    border-right: 0;
    border-bottom-color: #ccc;
  }

  .scroller {
    display: flex;
    grid-row: 7;
    justify-content: flex-end;
    padding-right: 1px;
  }

  .scroller button {
    box-sizing: border-box;
    width: 7px;
    border: 1px solid #a9a8ac;
  }

  .scroller svg {
    width: 4px;
    height: 7px;
    fill: #111;
  }

  .panel {
    display: flex;
    flex-direction: column;
    margin-top: 1px;
    padding-left: 2px;
    border: 1px solid #9a999d;
    font: 11px/14px var(--cjk), sans-serif;
  }

  .panel button {
    gap: 3px;
    height: 35px;
    justify-content: flex-start;
    color: #111;
  }

  .panel svg {
    width: 30px;
    height: 31px;
  }

  .panel hr {
    height: 1px;
    margin: 18px 10px 17px 8px;
    border: 0;
    background: #dfc88f;
  }

  .console {
    display: flex;
    height: 73px;
    border-top: 2px solid #85878f;
    box-shadow: 0 -3px #c9ccd5;
    background: #fff;
  }

  .handle {
    width: 18px;
    border-right: 1px solid #85878f;
    background: #b9bdca;
  }

  .handle button {
    width: 18px;
    height: 18px;
  }

  .handle svg {
    width: 8px;
    height: 8px;
    stroke: #111;
    stroke-width: 1.5;
  }

  .handle .solid {
    fill: #111;
    stroke: none;
  }

  .lines {
    display: flex;
    flex: 1;
    flex-direction: column;
  }

  .log {
    box-sizing: border-box;
    height: 53px;
    border-bottom: 1px solid #85878f;
  }

  .log p {
    height: 13px;
    margin: 0;
    padding-left: 1px;
    font: 13px/13px var(--cjk), sans-serif;
    white-space: pre;
    color: #111;
  }

  .log .latin {
    font-family: 'Liberation Mono', monospace;
    font-size: 11px;
  }

  .lines input {
    flex: 1;
    min-height: 0;
    padding: 0 2px;
    border: 0;
    outline: 0;
    font: 11px 'Liberation Mono', monospace;
  }

  .scrollbar {
    display: flex;
    flex-direction: column;
    align-items: center;
    justify-content: space-between;
    box-sizing: border-box;
    width: 16px;
    height: 53px;
    padding: 6px 0 5px;
    border-bottom: 1px solid #85878f;
    background: #f1f1f2;
  }

  .scrollbar svg {
    width: 8px;
    height: 6px;
    stroke: #444;
    stroke-width: 1.5;
  }

  .scrollbar i {
    width: 14px;
    height: 16px;
    margin-top: 6px;
    background: #c9c9cb;
  }

  .statusbar {
    display: flex;
    align-items: center;
    height: 21px;
    background: linear-gradient(#d3d6df, #aeb2c0 50%, #c6c9d3);
    font-size: 10px;
    color: #333;
  }

  .statusbar > span,
  .statusbar > button {
    display: flex;
    align-items: center;
    box-sizing: border-box;
    height: 19px;
    border-right: 1px solid #8f93a0;
  }

  .statusbar > button {
    width: 20px;
  }

  .statusbar .on {
    background: #f1ee8b;
  }

  .ready {
    flex: 1;
    padding-left: 3px;
    font-size: 12px;
  }

  .blank { width: 7px; }
  .coords { width: 129px; padding-left: 4px; }
  .gl { width: 45px; padding-left: 4px; }
  .scale { width: 38px; padding-left: 3px; gap: 2px; }
  .model { width: 42px; padding-left: 4px; }
  .tablet { width: 54px; color: #777; }

  .statusbar > .settings {
    width: 24px;
    border: 0;
  }

  .resize {
    align-self: flex-end;
    width: 12px;
    height: 12px;
    background: radial-gradient(circle at 1px 1px, #6d86a3 1px, transparent 1px) 0 0 / 4px 4px;
    clip-path: polygon(100% 0, 100% 100%, 0 100%);
  }

  .brand {
    position: absolute;
    right: 47px;
    bottom: 8px;
    display: flex;
    align-items: center;
    gap: 12px;
    box-sizing: border-box;
    width: 180px;
    height: 85px;
    padding: 0 0 2px 14px;
    background: #212f54;
    color: #cbd0dc;
  }

  .brand > svg {
    width: 36px;
    height: 36px;
    stroke: #cbd0dc;
    stroke-width: 3;
  }

  .brand .solid {
    fill: #cbd0dc;
    stroke: none;
  }

  .brand strong,
  .brand span {
    display: block;
  }

  .brand strong {
    font: 500 26px/30px var(--cjk), sans-serif;
  }

  .brand span {
    font: 12px/14px Inter, sans-serif;
  }

  .knob {
    position: absolute;
    top: -6px;
    left: 77px;
    width: 12px;
    height: 6px;
    border-radius: 6px 6px 0 0;
    background: #f2f3f6;
  }

  .knob + .knob {
    left: 93px;
  }
</style>
